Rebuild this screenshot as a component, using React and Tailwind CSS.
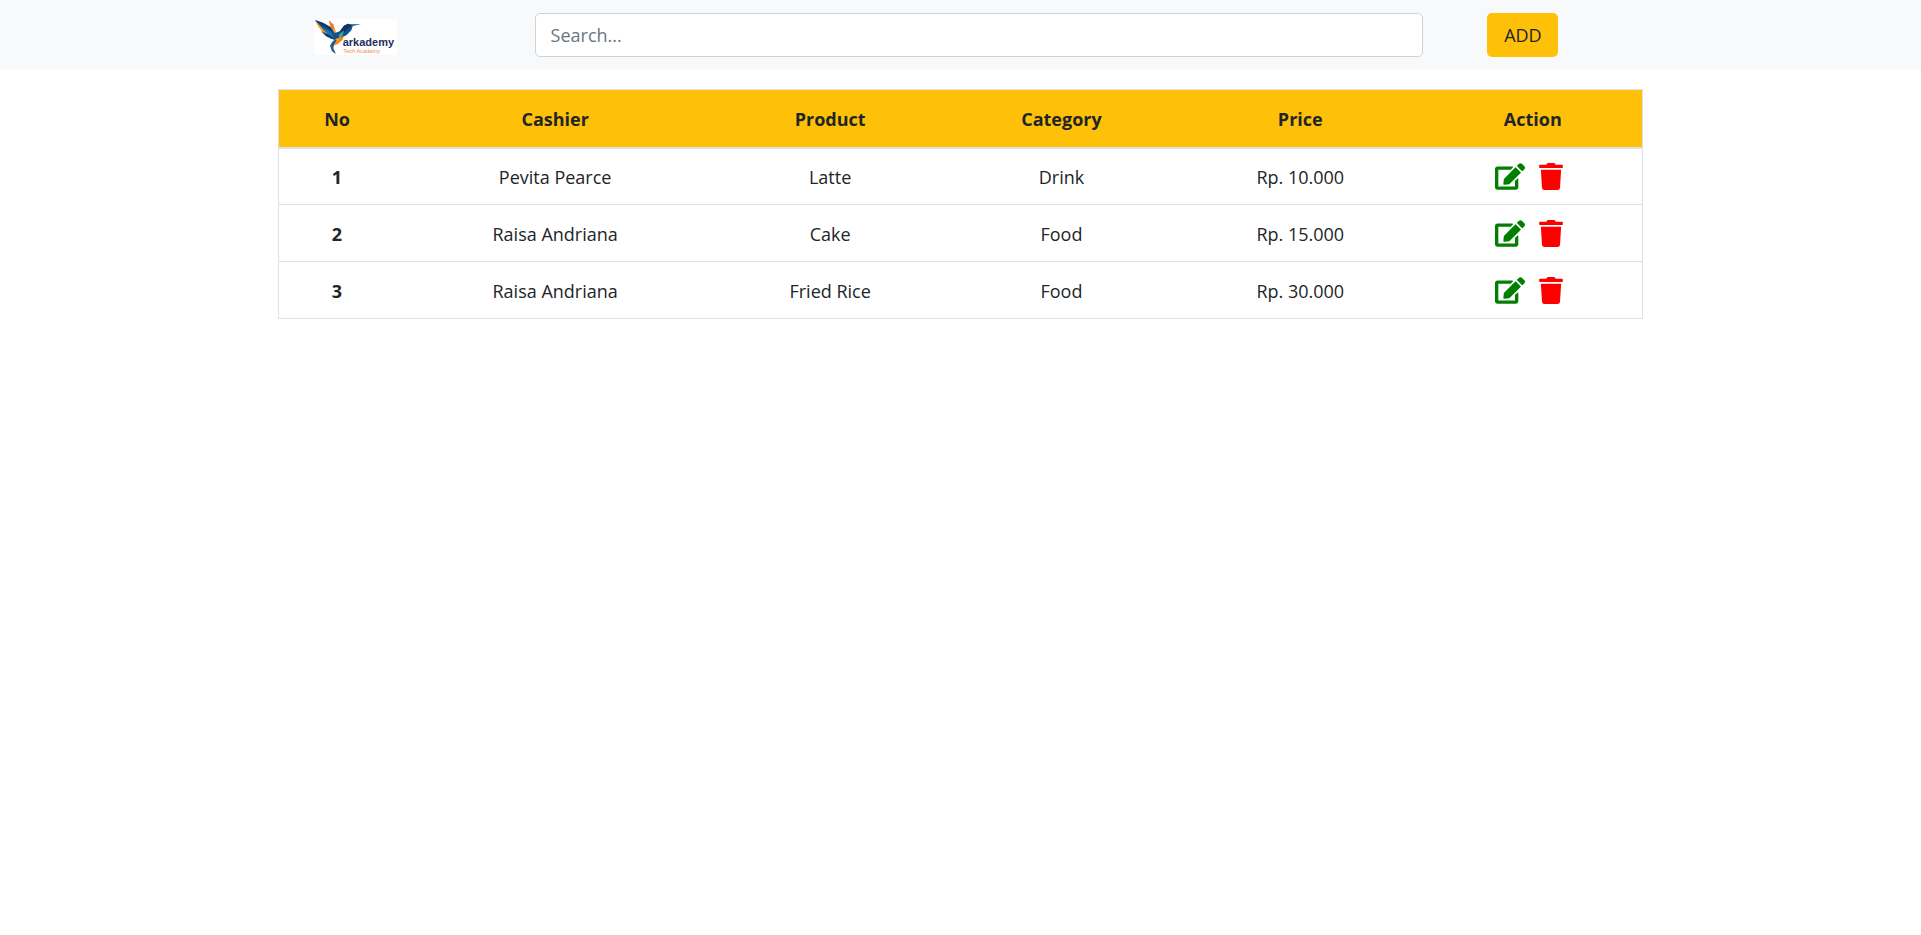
import React from "react";
import { FaEdit, FaTrash } from "react-icons/fa";

const rows = [
  { no: 1, cashier: "Pevita Pearce", product: "Latte", category: "Drink", price: "Rp. 10.000" },
  { no: 2, cashier: "Raisa Andriana", product: "Cake", category: "Food", price: "Rp. 15.000" },
  { no: 3, cashier: "Raisa Andriana", product: "Fried Rice", category: "Food", price: "Rp. 30.000" },
];

function Logo() {
  return (
    <svg viewBox="0 0 249 108" className="block h-9 w-[83px] bg-white" role="img" aria-label="Arkademy Tech Academy">
      <polygon points="3,3 28,12 50,24 66,42 64,62 50,57 26,38 14,22" fill="#15508c" />
      <polygon points="3,3 30,34 46,48 26,38 12,21" fill="#f9a11b" />
      <polygon points="3,3 28,12 48,24 56,36 28,22" fill="#0f3766" />
      <polygon points="24,24 50,38 62,56 44,48" fill="#1c74bb" />
      <polygon points="22,37 50,50 63,62 52,59 36,52" fill="#123a6b" />
      <polygon points="44,3 58,16 64,34 50,26" fill="#f47b2a" />
      <polygon points="56,30 64,34 68,44 60,40" fill="#f9a11b" />
      <polygon points="58,44 78,36 90,20 102,14 117,19 112,34 98,48 80,58 60,68" fill="#15508c" />
      <polygon points="78,36 90,20 102,14 117,19 104,26 90,40" fill="#123263" />
      <polygon points="106,16 141,15 115,22" fill="#35648f" />
      <polygon points="74,48 90,34 86,48 76,58" fill="#2bb39a" />
      <polygon points="66,60 90,50 86,62 70,76 56,80 54,70" fill="#f58220" />
      <polygon points="66,60 78,56 70,68 58,72" fill="#f9a11b" />
      <polygon points="62,62 54,70 48,80 54,97 66,105 58,88 60,76 68,64" fill="#1a5c9e" />
      <text x="86" y="82" fontFamily="Liberation Sans, sans-serif" fontWeight="700" fontSize="33" fill="#1d2f5f">arkademy</text>
      <text x="88" y="101" fontFamily="Liberation Sans, sans-serif" fontSize="17" fill="#f58a4b">Tech Academy</text>
    </svg>
  );
}

export default function App() {
  return (
    <div className="min-h-screen bg-white font-['Open_Sans','Noto_Sans',sans-serif] text-lg leading-7 text-[#212529]">
      <header className="bg-[#f8f9fa] py-[13px]">
        <div className="mx-auto flex w-[71.1%] items-center">
          <a href="#" className="ml-9 shrink-0 pt-1">
            <Logo />
          </a>
          <input
            type="search"
            aria-label="Search"
            placeholder="Search..."
            className="ml-[138px] h-11 min-w-0 flex-1 rounded-[5px] border border-[#ced4da] bg-white px-[15px] placeholder:text-[#6c757d]"
          />
          <button type="button" className="mr-[85px] ml-16 h-11 w-[71px] shrink-0 rounded-[5px] bg-[#ffc107]">
            ADD
          </button>
        </div>
      </header>
      <main className="mx-auto mt-[19px] w-[71.1%]">
        <table className="w-full table-fixed border-collapse border border-[#dee2e6] text-center">
          <colgroup>
            <col className="w-[8.6%]" />
            <col className="w-[23.4%]" />
            <col className="w-[16.9%]" />
            <col className="w-[17%]" />
            <col className="w-[18%]" />
            <col className="w-[16.1%]" />
          </colgroup>
          <thead>
            <tr className="h-[58px] border-b-2 border-[#dee2e6] bg-[#ffc107]">
              <th className="pt-0.5 font-bold">No</th>
              <th className="pt-0.5 font-bold">Cashier</th>
              <th className="pt-0.5 font-bold">Product</th>
              <th className="pt-0.5 font-bold">Category</th>
              <th className="pt-0.5 font-bold">Price</th>
              <th className="pt-0.5 font-bold">Action</th>
            </tr>
          </thead>
          <tbody>
            {rows.map((r) => (
              <tr key={r.no} className="h-[57px] border-b border-[#dee2e6]">
                <th scope="row" className="pt-0.5 font-bold">{r.no}</th>
                <td className="pt-0.5">{r.cashier}</td>
                <td className="pt-0.5">{r.product}</td>
                <td className="pt-0.5">{r.category}</td>
                <td className="pt-0.5">{r.price}</td>
                <td className="pr-2">
                  <div className="flex items-center justify-center gap-3.5">
                    <button type="button" aria-label="Edit" className="text-[#008000]">
                      <FaEdit className="h-[27px] w-[30px]" />
                    </button>
                    <button type="button" aria-label="Delete" className="text-[#ff0000]">
                      <FaTrash className="h-[27px] w-6" />
                    </button>
                  </div>
                </td>
              </tr>
            ))}
          </tbody>
        </table>
      </main>
    </div>
  );
}
